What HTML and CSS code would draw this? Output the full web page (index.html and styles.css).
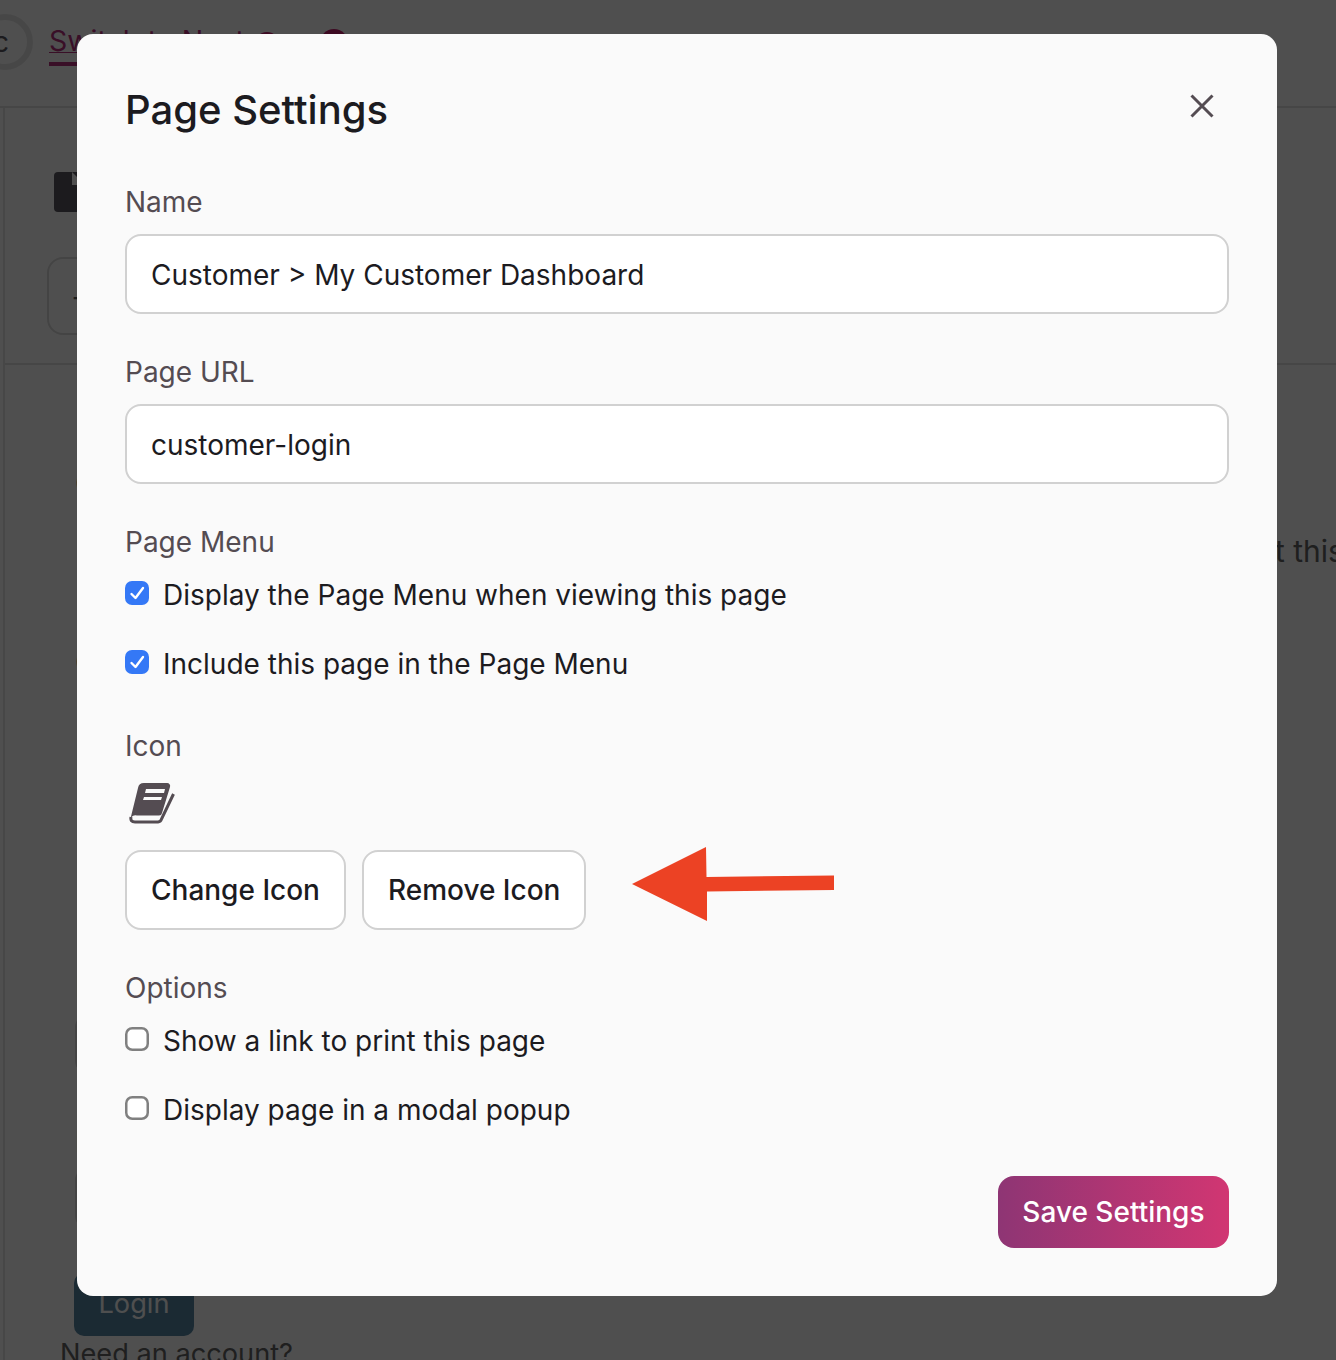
FILE: index.html
```html
<!DOCTYPE html>
<html lang="en">
<head>
<meta charset="utf-8">
<title>Page Settings</title>
<link rel="stylesheet" href="styles.css">
</head>
<body>
<div class="page">
  <header class="topbar">
    <span class="avatar">c</span>
    <a class="switch-link">Switch to Next</a>
    <span class="dot dot-small"></span>
    <span class="dot"></span>
  </header>
  <div class="content">
    <section class="toolbar">
      <svg class="doc-icon" viewBox="0 0 40 40" width="40" height="40"><rect width="40" height="40" rx="4" fill="#5a5860"/><path d="M18 0 31 13H18Z" fill="#fff"/></svg>
      <div class="tool-button">+</div>
    </section>
    <section class="behind">
      <p class="behind-line">Go</p>
      <p class="behind-line behind-far">about this page</p>
      <p class="behind-line behind-third">Go</p>
      <span class="field-label">ID</span>
      <div class="field-box"></div>
      <span class="field-label field-label-second">PIN</span>
      <div class="field-box field-box-second"></div>
      <div class="login-btn">Login</div>
      <p class="need">Need an account?</p>
    </section>
  </div>
</div>
<div class="overlay"></div>
<main class="modal">
  <div class="modal-head">
    <h1 class="title">Page Settings</h1>
    <svg class="close" viewBox="0 0 24 24" width="24" height="24"><path d="M1.500 1.500 22.500 22.500M22.500 1.500 1.500 22.500" stroke="#544c52" stroke-width="3" fill="none"/></svg>
  </div>
  <label class="label label-first">Name</label>
  <div class="input">Customer &gt; My Customer Dashboard</div>
  <label class="label label-next">Page URL</label>
  <div class="input">customer-login</div>
  <label class="label label-next">Page Menu</label>
  <div class="checks">
    <div class="check-row"><svg class="box" viewBox="0 0 24 24" width="24" height="24"><rect width="24" height="24" rx="7" fill="#3478f6"/><path d="M6.500 13 10.500 17 18 7" stroke="#fff" stroke-width="2.400" fill="none" stroke-linecap="round" stroke-linejoin="round"/></svg><span>Display the Page Menu when viewing this page</span></div>
    <div class="check-row"><svg class="box" viewBox="0 0 24 24" width="24" height="24"><rect width="24" height="24" rx="7" fill="#3478f6"/><path d="M6.500 13 10.500 17 18 7" stroke="#fff" stroke-width="2.400" fill="none" stroke-linecap="round" stroke-linejoin="round"/></svg><span>Include this page in the Page Menu</span></div>
  </div>
  <label class="label label-icon">Icon</label>
  <svg class="book" viewBox="0 0 46 42" width="46" height="42"><path d="M15 1H38a3 3 0 0 1 3 4L33 31a3 3 0 0 1-3 2.500H8a5 5 0 0 0-6.500 3L9 6a6 6 0 0 1 6-5Z" fill="#544c52"/><path d="M17 7H36L35 11H16ZM15 15H33L32 18H14Z" fill="#fafafa"/><path d="M2 35Q1 40 6 40H29a4 4 0 0 0 3.500-3L44.500 12" stroke="#544c52" stroke-width="3" fill="none"/></svg>
  <div class="icon-actions">
    <button class="btn">Change Icon</button>
    <button class="btn">Remove Icon</button>
    <svg class="arrow" viewBox="0 0 202 74" width="202" height="74"><path d="M0 37 74 0 74.500 30 202 28.500V43L75 44.500 75 74Z" fill="#ec4224"/></svg>
  </div>
  <label class="label label-next">Options</label>
  <div class="checks">
    <div class="check-row"><svg class="box" viewBox="0 0 24 24" width="24" height="24"><rect x="1.250" y="1.250" width="21.500" height="21.500" rx="6" fill="#fff" stroke="#808080" stroke-width="2.500"/></svg><span>Show a link to print this page</span></div>
    <div class="check-row"><svg class="box" viewBox="0 0 24 24" width="24" height="24"><rect x="1.250" y="1.250" width="21.500" height="21.500" rx="6" fill="#fff" stroke="#808080" stroke-width="2.500"/></svg><span>Display page in a modal popup</span></div>
  </div>
  <div class="modal-foot"><button class="save">Save Settings</button></div>
</main>
</body>
</html>
```
FILE: styles.css
```css
* { box-sizing: border-box; }
html, body { margin: 0; height: 1360px; overflow: hidden; }
body { font-family: "Inter", "Liberation Sans", sans-serif; color: #1c1b1f; background: #fff; position: relative; }

.page { height: 1360px; overflow: hidden; }
.topbar { height: 108px; border-bottom: 2px solid #e2e2e2; display: flex; align-items: flex-start; padding-top: 14px; }
.avatar { width: 56px; height: 56px; margin-left: -23px; padding-right: 8px; border: 6px solid #e6e6e6; border-radius: 50%; flex: none; display: flex; align-items: center; justify-content: center; font-size: 28px; color: #5a5860; }
.switch-link { margin: 10px 0 0 16px; padding-bottom: 4px; font-size: 28.500px; line-height: 34px; color: #b8307f; text-decoration: underline; text-decoration-thickness: 1px; border-bottom: 4px solid #b8307f; white-space: nowrap; align-self: flex-start; }
.dot { width: 28px; height: 28px; border-radius: 50%; background: #c4206f; margin: 15px 0 0 40px; flex: none; }
.dot-small { width: 26px; height: 26px; margin: 18px 0 0 9px; }

.content { margin-left: 3px; border-left: 2px solid #e6e6e6; }
.toolbar { height: 257px; border-bottom: 2px solid #e2e2e2; padding: 64px 0 0 49px; }
.doc-icon { display: block; }
.tool-button { width: 90px; height: 78px; margin: 45px 0 0 -7px; border: 2px solid #dcdcdc; border-radius: 16px; font-size: 28px; line-height: 74px; padding-left: 22px; color: #5f5f5f; }
.behind { padding-left: 70px; color: #666; }
.behind-line { margin: 98px 0 0; font-size: 30px; line-height: 40px; white-space: nowrap; color: #666; }
.behind-far { margin-top: 28px; padding-left: 1129px; }
.behind-third { margin-top: 71px; }
.field-label { display: block; height: 40px; margin-top: 285px; font-size: 28px; line-height: 40px; color: #666; }
.field-label-second { margin-top: 49px; }
.field-box { height: 58px; width: 400px; margin-top: 8px; border: 2px solid #dcdcdc; border-radius: 12px; }
.field-box-second { height: 60px; margin-top: 6px; }
.login-btn { width: 120px; height: 63px; margin-top: 45px; margin-left: -1px; background: #5787a5; color: #fff; border-radius: 10px; font-size: 27.200px; line-height: 62px; text-align: center; }
.need { margin: 0 0 0 -15px; font-size: 27.200px; line-height: 36px; color: #666; }

.overlay { position: absolute; inset: 0; background: rgba(0, 0, 0, .69); }
.modal { position: absolute; left: 77px; top: 34px; width: 1200px; height: 1262px; background: #fafafa; border-radius: 16px; padding: 48px; display: flex; flex-direction: column; }
.modal-head { display: flex; justify-content: space-between; align-items: flex-start; height: 64px; flex: none; }
.title { margin: 0; font-size: 40px; line-height: 56px; font-weight: 500; color: #1c1b1f; }
.close { margin: 12px 15px 0 0; }
.label { font-size: 28px; line-height: 40px; color: #544c52; height: 40px; flex: none; }
.label-first { margin-top: 36px; }
.label-next { margin-top: 38px; }
.label-icon { margin-top: 42px; }
.input { height: 80px; margin-top: 12px; background: #fff; border: 2px solid #d1d1d1; border-radius: 16px; padding: 0 24px; font-size: 28px; line-height: 78px; color: #1c1b1f; flex: none; }
.checks { display: flex; flex-direction: column; gap: 29px; margin-top: 13px; flex: none; }
.check-row { display: flex; align-items: flex-start; gap: 14px; font-size: 28px; line-height: 40px; color: #1c1b1f; }
.box { flex: none; margin-top: 6px; }
.book { display: block; margin: 16px 0 0 4px; flex: none; }
.icon-actions { display: flex; align-items: flex-start; gap: 16px; margin-top: 26px; flex: none; }
.btn { height: 80px; padding: 0 24px; background: #fff; border: 2px solid #d1d1d1; border-radius: 16px; font: 500 28px "Inter", "Liberation Sans", sans-serif; color: #1c1b1f; }
.arrow { margin: -3px 0 0 30px; flex: none; }
.modal-foot { display: flex; justify-content: flex-end; margin-top: auto; }
.save { height: 72px; padding: 0 24.500px; border: 0; border-radius: 16px; background: linear-gradient(90deg, #8e3574, #d13672); color: #fff; font: 500 28px "Inter", "Liberation Sans", sans-serif; }
```
